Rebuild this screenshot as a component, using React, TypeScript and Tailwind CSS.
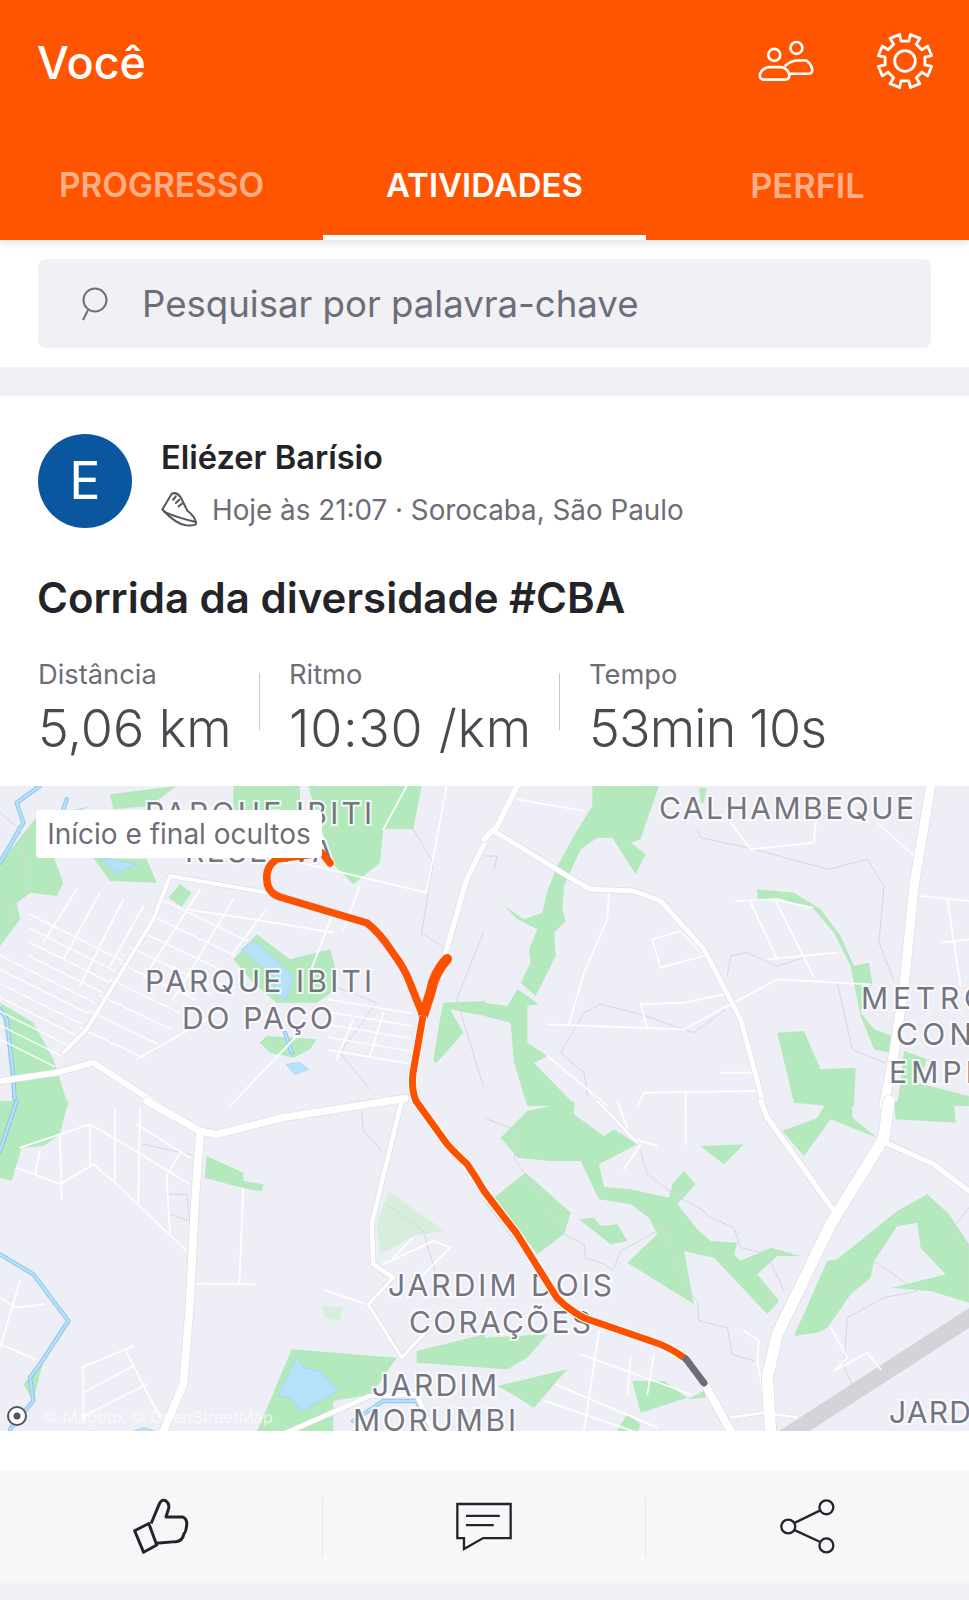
import React from "react";

const GREEN = "#b4e8bd";
const LIGHT_GREEN = "#d6eedb";
const WATER = "#b7e1f8";

// map coordinates below are read off 3x crops, each quadrant has its own origin
const quadrants = {
  q1: "translate(0 785) scale(0.3333)",
  q2: "translate(484 785) scale(0.3333)",
  q3: "translate(0 1100) scale(0.3333)",
  q4: "translate(484 1100) scale(0.3333)",
};

const greens = {
  q1: [
    "330,25 530,0 450,60 340,70",
    "700,0 900,0 900,80 700,80",
    "925,0 1265,0 1240,130 1150,130 1140,230 1060,295 1005,240 960,120",
    "0,230 105,100 270,60 130,130 190,290 170,330 90,320 50,350 60,400 0,480",
    "280,215 440,220 470,290 330,285",
    "540,295 575,320 545,362 505,335",
    "770,445 870,520 990,490 1005,540 1010,610 950,650 830,650 760,590 700,520",
    "780,770 800,750 950,760 930,790 880,815 810,800",
    "0,650 100,710 160,820 205,960 40,960 20,760",
    "1330,650 1455,645 1455,690 1350,670 1390,740 1310,830 1300,825 1320,700",
  ],
  q2: [
    "325,0 525,0 490,100 470,160 440,170 485,205 455,265 385,155 340,155 290,190 240,300 235,370 245,405 210,440 215,510 190,560 155,630 110,590 140,530 135,490 160,430 100,400 60,360 120,400 175,380 190,315 220,240 270,150 325,60",
    "100,610 165,655 130,660 130,770 190,810 150,830 275,960 130,960 90,830 80,710 0,690 0,650 70,660",
    "820,310 930,320 1010,370 1070,450 1110,540 1155,530 1165,590 1130,680 1170,730 1225,750 1220,800 1170,790 1130,690 1100,540 1050,440 990,370 880,335 820,345",
    "880,740 960,735 1010,850 1115,845 1110,960 1030,960 930,950",
    "1240,960 1260,795 1330,820 1300,890 1455,930 1455,960",
    "645,5 668,5 660,50 650,50",
  ],
  q3: [
    "205,0 180,100 130,135 65,140 35,240 0,230 0,0",
    "620,165 730,215 730,240 790,250 785,270 730,262 615,230",
    "875,745 1190,770 1115,880 1000,900 1000,995 770,995",
    "1250,750 1455,700 1455,800 1250,785",
    "70,850 130,780 100,900",
  ],
  q4: [
    "50,110 130,30 270,0 270,40 360,105 390,85 460,130 345,190 360,258 440,265 555,290 565,250 600,210 635,250 580,310 640,385 680,420 760,425 750,460 770,480 860,440 950,465 880,465 820,520 885,600 850,640 690,470 600,450 630,610 430,485 520,400 495,350 440,310 345,295 290,180 200,180 100,170",
    "30,290 125,215 260,335 240,400 160,460",
    "285,355 330,350 350,375 400,370 430,420 380,430",
    "930,705 1030,480 1060,475 1240,330 1330,280 1395,340 1455,430 1455,605 1340,570 1225,560 1385,520 1310,440 1300,365 1240,375 1170,480 1160,530 1100,580 1030,680 1000,695",
    "895,90 1000,50 1030,0 1105,0 1105,50 1180,110 1040,55 960,165",
    "650,135 780,130 720,190",
    "1230,0 1410,0 1415,65 1235,55",
    "0,710 190,700 130,770 70,805 0,800",
    "40,855 250,805 150,920 85,880",
    "445,840 540,840 610,890 470,935",
    "610,895 660,870 665,890",
    "395,995 430,940 470,970 460,995",
  ],
};

const lakes = {
  q1: [
    "300,215 410,235 350,262",
    "725,490 765,465 850,540 880,570 860,640 830,630 820,570",
    "860,835 900,830 925,850 885,865",
  ],
  q3: ["890,770 910,800 960,810 1015,870 905,930 870,890 835,885", "385,995 430,980 480,995"],
};

const rivers = {
  q1: ["120,0 50,50 70,110 0,230", "0,670 20,700 40,870 45,960", "855,740 875,800", "200,40 190,70"],
  q3: [
    "50,0 0,150",
    "0,460 100,520 205,660 120,790 90,830 100,900 30,985",
    "1060,960 1150,900 1250,900 1290,980",
  ],
};

const roads = {
  q1: [
    { d: "0,885 170,860 280,830 480,960", w: 18 },
    { d: "190,800 260,730 460,400 510,270 800,320 1010,385", w: 12 },
    { d: "1455,170 1400,280 1340,490 1290,640", w: 16 },
  ],
  q2: [
    { d: "100,0 40,120 0,160", w: 18 },
    { d: "30,135 250,270 320,310 450,315 530,345 660,490 770,700 840,960", w: 15 },
    { d: "1340,0 1290,300 1260,600 1230,800 1200,960", w: 28 },
  ],
  q3: [
    { d: "600,100 585,300 570,600 550,850 490,990", w: 24 },
    { d: "440,0 600,90 650,100 850,50 1215,-8", w: 22 },
    { d: "1205,0 1115,370 1120,490 1180,530", w: 14 },
    { d: "1180,530 1105,610 1205,770 1290,680", w: 10 },
    { d: "860,995 1110,885 1250,880 1300,995", w: 14 },
  ],
  q4: [
    { d: "830,0 850,50 1050,330", w: 16 },
    { d: "1215,0 1200,110 1040,370 880,700 850,830 860,995", w: 34 },
    { d: "1205,125 1350,190 1455,270", w: 16 },
    { d: "660,845 740,990", w: 24 },
    { d: "340,0 460,125", w: 8 },
    { d: "740,950 840,935 940,950", w: 8 },
  ],
};

const streets = {
  q1: [
    "230,310 130,470",
    "300,320 190,520",
    "370,340 240,600",
    "430,360 330,540",
    "600,310 430,580",
    "700,340 520,640",
    "800,370 700,500",
    "1000,380 930,560",
    "1080,300 1030,430",
    "1340,0 1280,320 900,230",
    "1220,0 1150,130",
    "1010,820 1060,700",
    "1110,810 1150,680",
    "410,820 640,690",
    "690,960 900,740",
    "560,370 760,400 1000,440",
  ],
  q2: [
    "100,40 300,75",
    "375,320 370,400 300,560 255,715",
    "505,460 590,435 660,510 530,545 505,460",
    "190,715 600,730 880,580 1160,595",
    "470,655 600,650 720,625",
    "470,655 490,730",
    "755,345 870,340 985,365",
    "800,350 880,520",
    "875,345 990,575",
    "850,520 1060,500",
    "740,110 800,190 990,170 995,110",
    "1180,110 1290,210",
    "1310,330 1455,345",
    "1390,340 1430,600",
    "1370,470 1455,460",
    "460,960 480,920 820,915",
    "190,810 370,960",
    "710,860 800,860",
    "605,915 605,960",
  ],
  q3: [
    "50,200 180,250 280,190 340,240 560,450",
    "60,140 270,70 340,110 570,250",
    "120,150 105,220",
    "180,110 185,295",
    "270,70 270,190",
    "345,20 345,240",
    "420,20 415,310",
    "410,70 570,170",
    "540,155 500,225 510,400",
    "730,262 718,550",
    "590,548 765,550",
    "0,590 50,620 130,610",
    "60,540 0,740",
    "0,730 105,775",
    "245,800 400,735",
    "250,875 400,795",
    "250,945 440,850",
    "250,800 250,960",
    "375,745 480,950",
    "975,568 1100,610",
    "1150,490 1300,420 1350,440 1260,530",
    "1180,470 1240,410",
  ],
  q4: [
    "345,690 300,990",
    "290,760 620,880",
    "215,850 520,980",
    "185,900 460,995",
    "440,770 430,880",
    "510,760 490,880",
    "400,0 440,110 520,135",
    "470,130 420,205",
    "605,0 605,130",
    "780,690 825,720 820,780 835,860",
    "1040,680 1090,770 1050,810 1150,755 1190,805",
  ],
};

const contours = {
  q1: ["0,80 60,130 90,320 50,350 20,440", "1240,130 1300,230 1265,440 1340,490", "1450,440 1370,640 1450,900", "1000,600 1130,650 1020,800 1110,910"],
  q2: [
    "640,130 650,155 790,185 1035,250 1150,220 1200,300 1185,470 1230,585",
    "730,570 740,510 790,500 880,540 960,515",
    "725,670 630,740 470,685 350,655 300,680 230,800 300,860 310,930",
    "1060,590 1105,790 1200,830",
    "0,210 40,210 30,250",
  ],
  q3: [
    "430,130 590,165",
    "505,280 560,280 570,360 510,340",
    "1085,30 1090,90 1145,150",
    "1160,310 1270,390 1320,560",
    "1110,610 1200,750",
  ],
  q4: [
    "0,50 100,90 90,170 240,400 300,430 305,470 360,490 390,510",
    "390,500 410,450 540,380 600,550 640,600 645,660 730,680 745,760 810,780",
    "470,150 490,220 570,280 660,330 670,345 750,380 770,440 850,460 900,570",
    "1040,600 1170,480 1300,570 1200,590 1090,650 1080,800 1110,860",
    "0,300 140,480",
    "1455,320 1400,390 1455,440",
  ],
};

// parallel streets of the left block, they stop at the ring road
const leftBlock = Array.from({ length: 11 }, (_, i) => {
  const y1 = 340 + i * 42;
  const x2 = (470 - (y1 - 360) * 0.636) / 1.318;
  const x1 = y1 < 480 ? 90 : 0;
  return { x1, y1: y1 + x1 * 0.5, x2, y2: y1 + x2 * 0.5 };
});

// same idea inside the ring, left of the park
const innerBlock = Array.from({ length: 9 }, (_, i) => {
  const y1 = 340 + i * 48;
  const x1 = 470 - (y1 - 360) * 0.636;
  return { x1, y1, x2: x1 + 260 - i * 8, y2: y1 + (260 - i * 8) * 0.48 };
});

// the grid east of the park
const eastBlock = Array.from({ length: 5 }, (_, i) => {
  const y1 = 640 + i * 38;
  return { x1: 985, y1, x2: 1235, y2: y1 + 42 };
});

const labels = [
  { t: "PARQUE IBITI", x: 145, y: 823, w: 227 },
  { t: "RESERVA", x: 185, y: 861, w: 148 },
  { t: "PARQUE IBITI", x: 145, y: 991, w: 227 },
  { t: "DO PAÇO", x: 182, y: 1028, w: 151 },
  { t: "CALHAMBEQUE", x: 659, y: 818, w: 255 },
  { t: "METRO", x: 861, y: 1008, w: 126 },
  { t: "CON", x: 896, y: 1044, w: 76 },
  { t: "EMPR", x: 889, y: 1082, w: 96 },
  { t: "JARDIM DOIS", x: 388, y: 1295, w: 224 },
  { t: "CORAÇÕES", x: 409, y: 1332, w: 182 },
  { t: "JARDIM", x: 372, y: 1395, w: 125 },
  { t: "MORUMBI", x: 353, y: 1430, w: 163 },
  { t: "JARD", x: 889, y: 1422, w: 82 },
];

// route in page coordinates
const routeA = "M330,862 L322,852 L277,858 Q265,866 267,880 Q268,892 280,896 L320,908 L367,922 Q380,932 393,952 Q405,968 410,982 L422,1012";
const routeB =
  "M423,1015 L413,1072 Q411,1088 416,1100 L447,1143 Q455,1152 467,1163 Q476,1176 484,1190 L517,1233 L557,1297 Q568,1308 584,1317 L651,1340 Q670,1346 686,1358";

function gearPath() {
  // 8 teeth round a centre, used for the header settings icon
  const pts: string[] = [];
  for (let i = 0; i < 8; i++) {
    const a = (i * Math.PI) / 4 - Math.PI / 8;
    const p = (r: number, d: number) =>
      `${(13 + r * Math.cos(a + d)).toFixed(2)},${(13 + r * Math.sin(a + d)).toFixed(2)}`;
    pts.push(p(9.4, -0.2), p(12.6, -0.19), p(12.6, 0.19), p(9.4, 0.2));
  }
  return "M" + pts.join(" L") + " Z";
}

function MapArea() {
  return (
    <div className="relative h-[645px] w-full overflow-hidden bg-[#eeeef7]">
      <svg viewBox="0 785 969 645" className="block h-[645px] w-[969px]">
        {(Object.keys(quadrants) as (keyof typeof quadrants)[]).map((q) => (
          <g key={q} transform={quadrants[q]} fill="none" strokeLinejoin="round" strokeLinecap="round">
            {greens[q].map((p, i) => (
              <polygon key={i} points={p} fill={GREEN} />
            ))}
            {q === "q3" && (
              <>
                <polygon points="1165,270 1335,390 1240,405 1140,460 1130,370" fill={LIGHT_GREEN} />
                <polygon points="965,615 1030,620 1020,660 975,650" fill={LIGHT_GREEN} />
              </>
            )}
            {contours[q].map((p, i) => (
              <polyline key={i} points={p} stroke="#d6d6e0" strokeWidth={3} />
            ))}
            {(lakes as Record<string, string[]>)[q]?.map((p, i) => (
              <polygon key={i} points={p} fill={WATER} stroke="#a9d6f2" strokeWidth={3} />
            ))}
            {(rivers as Record<string, string[]>)[q]?.map((p, i) => (
              <g key={i}>
                <polyline points={p} stroke="#8cc4ee" strokeWidth={13} />
                <polyline points={p} stroke={WATER} strokeWidth={7} />
              </g>
            ))}
            {q === "q4" && <polyline points="1480,635 900,1010" stroke="#d3d3da" strokeWidth={50} strokeLinecap="butt" />}
            {q === "q1" &&
              [...leftBlock, ...innerBlock, ...eastBlock].map((l, i) => (
                <line key={i} x1={l.x1} y1={l.y1} x2={l.x2} y2={l.y2} stroke="#fff" strokeWidth={4} />
              ))}
            {streets[q].map((p, i) => (
              <polyline key={i} points={p} stroke="#fff" strokeWidth={5} />
            ))}
            {roads[q].map((r, i) => (
              <polyline key={i} points={r.d} stroke="#dcdce5" strokeWidth={r.w + 4} />
            ))}
            {roads[q].map((r, i) => (
              <polyline key={i} points={r.d} stroke="#fff" strokeWidth={r.w} />
            ))}
          </g>
        ))}

        <g className="fill-[#75757f] font-['Inter',sans-serif] text-[30px]" stroke="#ffffff" strokeWidth={4} paintOrder="stroke" strokeOpacity={0.75}>
          {labels.map((l) => (
            <text key={l.t + l.y} x={l.x} y={l.y} textLength={l.w}>
              {l.t}
            </text>
          ))}
        </g>

        <path d={routeA} fill="none" stroke="#fc5200" strokeWidth={7.5} strokeLinecap="round" strokeLinejoin="round" />
        <path d="M447,958 Q434,972 431,990 L423,1015" fill="none" stroke="#fc5200" strokeWidth={10} strokeLinecap="round" strokeLinejoin="round" />
        <path d={routeB} fill="none" stroke="#fff" strokeWidth={9} strokeLinejoin="round" />
        <path d={routeB} fill="none" stroke="#fc5200" strokeWidth={7} strokeLinejoin="round" />
        <path d="M686,1358 L704,1382" fill="none" stroke="#6d6d78" strokeWidth={7} strokeLinecap="round" />

        <text x={43} y={1422} className="fill-white font-['Inter',sans-serif] text-[16.5px]" fillOpacity={0.65}>
          © Mapbox © OpenStreetMap
        </text>
        <circle cx={17} cy={1415} r={9} fill="#fff" stroke="#55555f" strokeWidth={2} />
        <circle cx={17} cy={1415} r={3.5} fill="#55555f" />
      </svg>

      <div className="absolute left-[36px] top-[24px] flex h-[48px] w-[286px] items-center justify-center rounded-[4px] bg-white text-[28px] text-[#6d6d78]">
        Início e final ocultos
      </div>
    </div>
  );
}

function Stat({ label, value, className, valueClass }: { label: string; value: string; className: string; valueClass: string }) {
  return (
    <div className={className}>
      <div className="h-[35px] text-[27.3px] leading-[35px] text-[#6d6d78]">{label}</div>
      <div className={`mt-[7px] text-[52px] leading-[60px] font-light text-[#494950] ${valueClass}`}>{value}</div>
    </div>
  );
}

export default function App() {
  return (
    <div className="h-[1600px] w-[969px] overflow-hidden bg-[#f0f0f5] font-['Inter',sans-serif]">
      {/* Cabeçalho */}
      <header className="relative flex h-[240px] flex-col bg-[#ff5500] shadow-[0_3px_8px_rgba(0,0,0,0.12)]">
        <div className="flex h-[125px] items-center justify-between pr-[36px] pl-[37px]">
          <h1 className="text-[45px] font-medium text-white">Você</h1>
          <div className="mb-[4px] flex items-center gap-[62px]">
            <svg viewBox="40 55 170 130" className="h-[43px] w-[57px]" fill="none" stroke="#fff" strokeWidth={8}>
              <circle cx={88} cy={103} r={18} />
              <circle cx={155} cy={82} r={18} />
              <path d="M58,178 Q42,178 45,160 Q55,140 75,140 L105,140 Q125,140 133,160 Q136,178 120,178 Z" />
              <path d="M122,135 Q140,120 160,120 L185,120 Q200,130 203,148 Q203,160 190,160 L133,160" strokeLinecap="round" />
            </svg>
            <svg viewBox="0 0 26 26" className="h-[56px] w-[56px]" fill="none" stroke="#fff" strokeWidth={1.3} strokeLinejoin="round">
              <path d={gearPath()} />
              <circle cx={13} cy={13} r={4.8} />
            </svg>
          </div>
        </div>
        <nav className="grid flex-1 grid-cols-3 text-[33.4px] font-semibold">
          <div className="flex items-center justify-center pt-[6px] text-[#ffae85]">PROGRESSO</div>
          <div className="flex items-center justify-center border-b-[5px] border-white pt-[11px] text-[33px] text-white">ATIVIDADES</div>
          <div className="flex items-center justify-center pt-[6px] text-[34.4px] text-[#ffae85]">PERFIL</div>
        </nav>
      </header>

      {/* Busca */}
      <div className="h-[127px] bg-white px-[38px] pt-[19px]">
        <div className="flex h-[89px] items-center rounded-[8px] bg-[#f0f0f5] pl-[41px]">
          <svg viewBox="0 0 30 34" className="h-[34px] w-[30px]" fill="none" stroke="#6d6d78" strokeWidth={2}>
            <circle cx={16} cy={13} r={11.5} />
            <path d="M9,23 L4,33" />
          </svg>
          <span className="ml-[33px] pt-[2px] text-[36.6px] text-[#6d6d78]">Pesquisar por palavra-chave</span>
        </div>
      </div>

      {/* Atividade */}
      <section className="mt-[29px] bg-white">
        <div className="flex items-start px-[38px] pt-[38px]">
          <div className="flex h-[94px] w-[94px] items-center justify-center rounded-full bg-[#0a569f] text-[52px] text-white">
            E
          </div>
          <div className="ml-[29px]">
            <div className="text-[32.6px] leading-[46px] font-semibold text-[#242428]">Eliézer Barísio</div>
            <div className="mt-[11px] flex items-center">
              <svg viewBox="0 0 110 110" className="h-[37px] w-[37px]" fill="none" stroke="#55555f" strokeWidth={6} strokeLinejoin="round" strokeLinecap="round">
                <path d="M4,55 L32,8 Q46,2 58,18 L78,58 Q104,78 104,98 Q100,104 74,102 Q44,98 4,55 Z" />
                <path d="M44,16 L36,26 M54,26 L44,36 M62,38 L52,46 M10,62 Q50,80 104,92" />
              </svg>
              <span className="ml-[14px] text-[27.8px] leading-[36px] text-[#6d6d78]">
                Hoje às 21:07 · Sorocaba, São Paulo
              </span>
            </div>
          </div>
        </div>

        <h2 className="mt-[40px] px-[37px] text-[42px] leading-[60px] font-semibold text-[#242428]">
          Corrida da diversidade #CBA
        </h2>

        <div className="mt-[29px] flex h-[129px] pl-[38px]">
          <Stat label="Distância" value="5,06 km" className="w-[221px]" valueClass="" />
          <div className="mt-[16px] h-[57px] w-px bg-[#c8c8d0]" />
          <Stat label="Ritmo" value="10:30 /km" className="ml-[29px] w-[270px]" valueClass="tracking-[0.7px]" />
          <div className="mt-[16px] h-[57px] w-px bg-[#c8c8d0]" />
          <Stat label="Tempo" value="53min 10s" className="ml-[29px]" valueClass="tracking-[-0.8px]" />
        </div>

        <MapArea />
        <div className="h-[39px]" />
      </section>

      {/* Ações */}
      <div className="grid h-[113px] grid-cols-3 items-center bg-[#f7f7fa]">
        <div className="flex h-[58px] items-center justify-center border-r border-[#e6e6eb]">
          <svg viewBox="40 20 170 175" className="mb-[2px] h-[58px] w-[56px]" fill="none" stroke="#242428" strokeWidth={9} strokeLinejoin="round">
            <path d="M95,100 L118,45 Q125,25 138,30 Q152,38 148,55 L140,80 L190,80 Q205,85 203,105 Q200,130 195,130 Q190,155 170,155 L110,160" />
            <polygon points="45,122 88,100 112,165 72,187" />
          </svg>
        </div>
        <div className="flex h-[58px] items-center justify-center border-r border-[#e6e6eb]">
          <svg viewBox="15 36 175 148" className="h-[49px] w-[58px]" fill="none" stroke="#242428" strokeWidth={7}>
            <path d="M22,42 L183,42 L183,145 L100,145 L42,178 L42,145 L22,145 Z" />
            <path d="M48,78 L150,78 M48,106 L132,106" />
          </svg>
        </div>
        <div className="flex h-[58px] items-center justify-center">
          <svg viewBox="985 22 175 172" className="h-[57px] w-[58px]" fill="none" stroke="#242428" strokeWidth={7}>
            <circle cx={1128} cy={50} r={21} />
            <circle cx={1013} cy={108} r={21} />
            <circle cx={1128} cy={165} r={21} />
            <path d="M1032,97 L1108,60 M1032,119 L1108,154" />
          </svg>
        </div>
      </div>
    </div>
  );
}
